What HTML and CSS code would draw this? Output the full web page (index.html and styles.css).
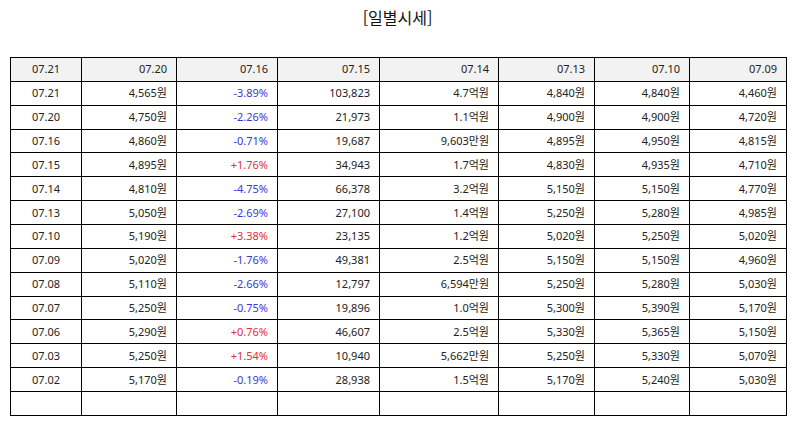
FILE: index.html
```html
<!DOCTYPE html>
<html lang="ko">
<head>
<meta charset="utf-8">
<title>일별시세</title>
<link rel="stylesheet" href="styles.css">
</head>
<body>
<div class="page">
  <h1 class="title">[일별시세]</h1>
  <table class="prices">
    <colgroup>
      <col class="c1"><col class="c2"><col class="c3"><col class="c4"><col class="c5"><col class="c6"><col class="c7"><col class="c8">
    </colgroup>
    <thead>
      <tr><th class="center">07.21</th><th>07.20</th><th>07.16</th><th>07.15</th><th>07.14</th><th>07.13</th><th>07.10</th><th>07.09</th></tr>
    </thead>
    <tbody>
      <tr><td class="center">07.21</td><td>4,565원</td><td class="down">-3.89%</td><td>103,823</td><td>4.7억원</td><td>4,840원</td><td>4,840원</td><td>4,460원</td></tr>
      <tr><td class="center">07.20</td><td>4,750원</td><td class="down">-2.26%</td><td>21,973</td><td>1.1억원</td><td>4,900원</td><td>4,900원</td><td>4,720원</td></tr>
      <tr><td class="center">07.16</td><td>4,860원</td><td class="down">-0.71%</td><td>19,687</td><td>9,603만원</td><td>4,895원</td><td>4,950원</td><td>4,815원</td></tr>
      <tr><td class="center">07.15</td><td>4,895원</td><td class="up">+1.76%</td><td>34,943</td><td>1.7억원</td><td>4,830원</td><td>4,935원</td><td>4,710원</td></tr>
      <tr><td class="center">07.14</td><td>4,810원</td><td class="down">-4.75%</td><td>66,378</td><td>3.2억원</td><td>5,150원</td><td>5,150원</td><td>4,770원</td></tr>
      <tr><td class="center">07.13</td><td>5,050원</td><td class="down">-2.69%</td><td>27,100</td><td>1.4억원</td><td>5,250원</td><td>5,280원</td><td>4,985원</td></tr>
      <tr><td class="center">07.10</td><td>5,190원</td><td class="up">+3.38%</td><td>23,135</td><td>1.2억원</td><td>5,020원</td><td>5,250원</td><td>5,020원</td></tr>
      <tr><td class="center">07.09</td><td>5,020원</td><td class="down">-1.76%</td><td>49,381</td><td>2.5억원</td><td>5,150원</td><td>5,150원</td><td>4,960원</td></tr>
      <tr><td class="center">07.08</td><td>5,110원</td><td class="down">-2.66%</td><td>12,797</td><td>6,594만원</td><td>5,250원</td><td>5,280원</td><td>5,030원</td></tr>
      <tr><td class="center">07.07</td><td>5,250원</td><td class="down">-0.75%</td><td>19,896</td><td>1.0억원</td><td>5,300원</td><td>5,390원</td><td>5,170원</td></tr>
      <tr><td class="center">07.06</td><td>5,290원</td><td class="up">+0.76%</td><td>46,607</td><td>2.5억원</td><td>5,330원</td><td>5,365원</td><td>5,150원</td></tr>
      <tr><td class="center">07.03</td><td>5,250원</td><td class="up">+1.54%</td><td>10,940</td><td>5,662만원</td><td>5,250원</td><td>5,330원</td><td>5,070원</td></tr>
      <tr><td class="center">07.02</td><td>5,170원</td><td class="down">-0.19%</td><td>28,938</td><td>1.5억원</td><td>5,170원</td><td>5,240원</td><td>5,030원</td></tr>
      <tr class="empty"><td></td><td></td><td></td><td></td><td></td><td></td><td></td><td></td></tr>
    </tbody>
  </table>
</div>
</body>
</html>
```

FILE: styles.css
```css
html, body {
  margin: 0;
  padding: 0;
  background: #ffffff;
}

body {
  font-family: "Noto Sans", "Noto Sans CJK KR", sans-serif;
  color: #222222;
}

.page {
  padding: 0 9px 0 10px;
}

.title {
  margin: 0;
  padding-top: 5px;
  height: 57px;
  box-sizing: border-box;
  font-size: 16px;
  font-weight: normal;
  line-height: 24px;
  text-align: center;
  color: #111111;
  font-family: "Noto Sans CJK KR", "Noto Sans", sans-serif;
}

.prices {
  width: 776px;
  border-collapse: collapse;
  table-layout: fixed;
  font-size: 11px;
}

.c1 { width: 71px; }
.c2 { width: 95px; }
.c3 { width: 101px; }
.c4 { width: 102px; }
.c5 { width: 119px; }
.c6 { width: 96px; }
.c7 { width: 95px; }
.c8 { width: 97px; }

.prices th,
.prices td {
  border: 1px solid #000000;
  height: 23.87px;
  padding: 0 9px 0 4px;
  text-align: right;
  font-weight: normal;
  line-height: 14px;
  white-space: nowrap;
  box-sizing: border-box;
}

.prices th {
  background: #f2f2f2;
}

.prices .center {
  text-align: center;
  padding: 0 2px;
}

.prices .down {
  color: #3a3ad0;
}

.prices .up {
  color: #e0303a;
}
```
